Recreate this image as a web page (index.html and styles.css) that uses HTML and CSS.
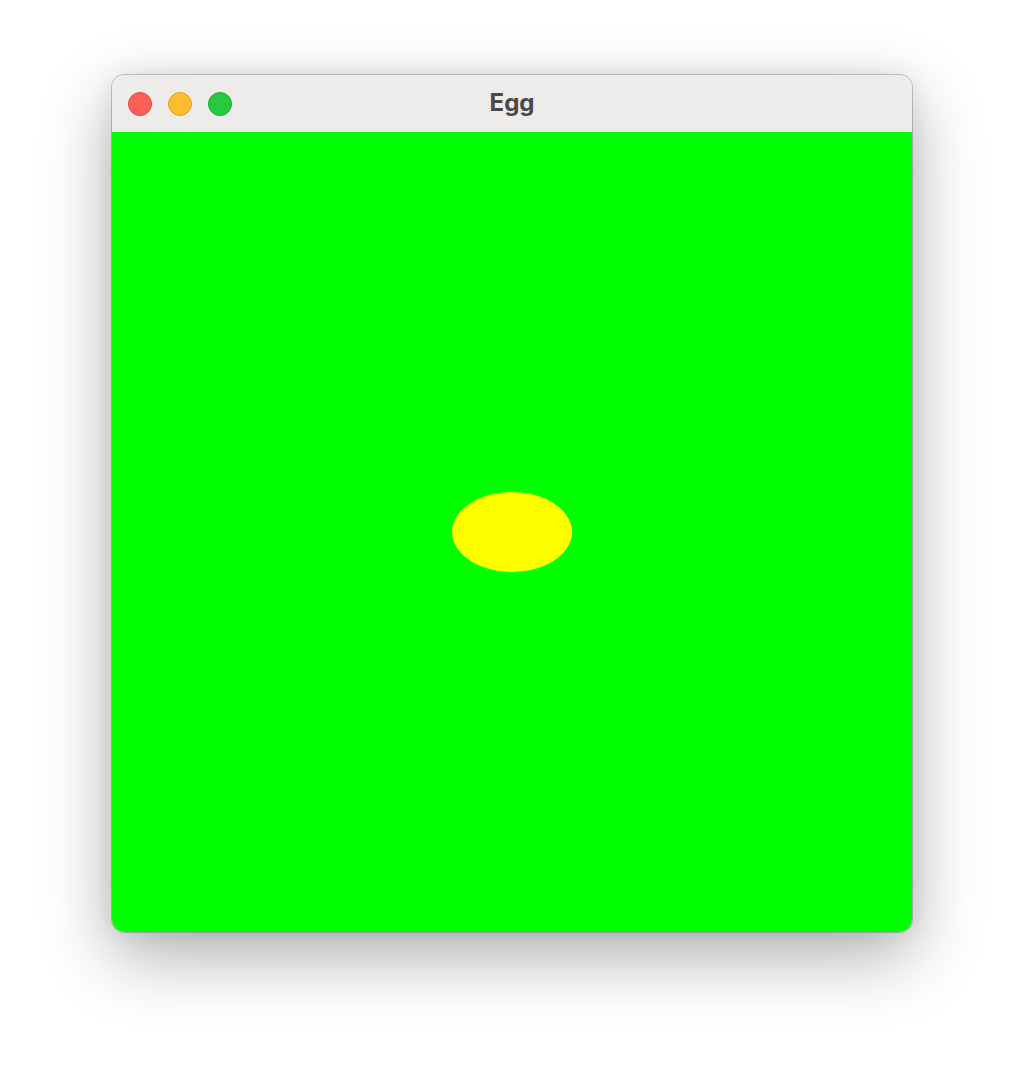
FILE: index.html
```html
<!DOCTYPE html>
<html>
<head>
<meta charset="utf-8">
<title>Egg</title>
<link rel="stylesheet" href="styles.css">
</head>
<body>
<div class="desk">
  <div class="window">
    <div class="titlebar">
      <div class="lights">
        <span class="light red"></span>
        <span class="light yellow"></span>
        <span class="light green"></span>
      </div>
      <div class="title">Egg</div>
    </div>
    <div class="canvas">
      <div class="egg"></div>
    </div>
  </div>
</div>
</body>
</html>
```
FILE: styles.css
```css
html, body {
  margin: 0;
  padding: 0;
  background: #ffffff;
}
.desk {
  width: 1024px;
  height: 1080px;
  display: flex;
  justify-content: center;
  align-items: flex-start;
  padding-top: 75px;
  box-sizing: border-box;
}
.window {
  width: 800px;
  border-radius: 13px;
  overflow: hidden;
  box-shadow: 0 0 0 1px rgba(0,0,0,0.2), 0 24px 70px rgba(0,0,0,0.32), 0 0 24px rgba(0,0,0,0.08);
  display: flex;
  flex-direction: column;
}
.titlebar {
  height: 57px;
  background: #eeebeb;
  position: relative;
  display: flex;
  align-items: center;
  justify-content: center;
}
.lights {
  position: absolute;
  left: 16px;
  top: 17px;
  display: flex;
  gap: 16px;
}
.light {
  width: 22px;
  height: 22px;
  border-radius: 50%;
  display: block;
}
.red { background: #ff5f57; border: 1px solid #e2463f; }
.yellow { background: #febc2e; border: 1px solid #e1a325; }
.green { background: #28c840; border: 1px solid #14ae2c; }
.title {
  font-family: "Inter", "Open Sans", sans-serif;
  font-weight: 700;
  font-size: 24px;
  color: #4a4848;
  margin-top: -2px;
}
.canvas {
  height: 800px;
  background: #00ff00;
  display: flex;
  align-items: center;
  justify-content: center;
}
.egg {
  width: 120px;
  height: 80px;
  border-radius: 50%;
  background: #ffff00;
}
```
